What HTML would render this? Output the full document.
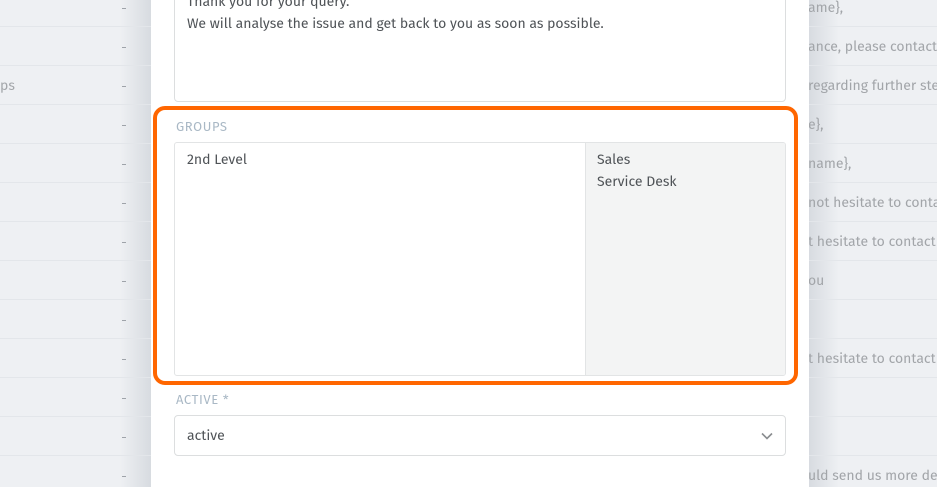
<!DOCTYPE html>
<html style="width:937px;height:487px;overflow:hidden"><head><meta charset="utf-8"><style>
*{margin:0;padding:0;box-sizing:border-box}
body{width:937px;height:487px;overflow:hidden;background:#eef0f3;font-family:"Fira Sans","Liberation Sans",sans-serif;position:relative}
.row{position:absolute;left:0;width:937px;height:39px;border-bottom:1px solid #e3e6ea;font-size:14px;color:#a3a6aa}
.dash{position:absolute;left:122px;top:0;width:4px;height:1px;background:#9ea3a9}
.bgtxt{position:absolute;left:808px;white-space:nowrap;font-size:14px;color:#a2a5a9}
.shadowL{position:absolute;left:120px;top:0;width:31px;height:487px;background:linear-gradient(to right,rgba(200,205,212,0),rgba(200,205,212,.6))}
.shadowR{position:absolute;left:809px;top:0;width:30px;height:487px;background:linear-gradient(to left,rgba(200,205,212,0),rgba(200,205,212,.6))}
.modal{position:absolute;left:151px;top:0;width:658px;height:487px;background:#fff}
.ta{position:absolute;left:23px;top:-10px;width:612px;height:112px;border:1px solid #dcdedf;border-radius:4px;font-size:14px;color:#4f5357;padding:0 12px}
.lbl{position:absolute;font-size:13px;letter-spacing:.6px;color:#a9b8c5;left:25px}
.og{position:absolute;left:2px;top:106px;width:645px;height:279px;border:4px solid #ff6600;border-radius:12px}
.box{position:absolute;left:23px;top:142px;width:612px;height:234px;border:1px solid #e2e4e5;border-radius:3px;overflow:hidden;font-size:14px;color:#4f5357}
.right{position:absolute;left:410px;top:0;right:0;bottom:0;background:#f3f4f4;border-left:1px solid #e2e4e5;padding:6px 11px;line-height:22px}
.sel{position:absolute;left:23px;top:415px;width:612px;height:41px;border:1px solid #dcdedf;border-radius:4px;font-size:14px;color:#4f5357;padding:11px 12px}
</style></head><body>
<div class="shadowL"></div><div class="shadowR"></div>
<div class="row" style="top:-12px"></div>
<div class="row" style="top:27px"></div><div class="row" style="top:66px"></div><div class="row" style="top:105px"></div><div class="row" style="top:144px"></div><div class="row" style="top:183px"></div><div class="row" style="top:222px"></div><div class="row" style="top:261px"></div><div class="row" style="top:300px"></div><div class="row" style="top:339px"></div><div class="row" style="top:378px"></div><div class="row" style="top:417px"></div><div class="row" style="top:456px;height:31px;border:0"></div>
<div class="dash" style="top:8px"></div><div class="dash" style="top:47px"></div><div class="dash" style="top:86px"></div><div class="dash" style="top:125px"></div><div class="dash" style="top:164px"></div><div class="dash" style="top:203px"></div><div class="dash" style="top:242px"></div><div class="dash" style="top:281px"></div><div class="dash" style="top:320px"></div><div class="dash" style="top:359px"></div><div class="dash" style="top:398px"></div><div class="dash" style="top:437px"></div><div class="dash" style="top:476px"></div>
<div style="position:absolute;left:0;top:77px;font-size:14px;color:#a3a6aa">ps</div>
<div class="bgtxt" style="top:-1px">ame},</div>
<div class="bgtxt" style="top:38px">ance, please contact</div>
<div class="bgtxt" style="top:77px">regarding further ste</div>
<div class="bgtxt" style="top:116px">e},</div>
<div class="bgtxt" style="top:155px">name},</div>
<div class="bgtxt" style="top:194px">not hesitate to conta</div>
<div class="bgtxt" style="top:233px">t hesitate to contact</div>
<div class="bgtxt" style="top:272px">ou</div>
<div class="bgtxt" style="top:350px">t hesitate to contact</div>
<div class="bgtxt" style="top:467px">uld send us more de</div>
<div class="modal">
 <div class="ta"><div style="position:absolute;top:0;left:12px;line-height:22px;margin-top:0px">Thank you for your query.<br>We will analyse the issue and get back to you as soon as possible.</div></div>
 <div class="og"></div>
 <div class="lbl" style="top:120px">GROUPS</div>
 <div class="box"><div style="position:absolute;left:12px;top:6px;line-height:22px">2nd Level</div><div class="right">Sales<br>Service Desk</div></div>
 <div class="lbl" style="top:393px">ACTIVE *</div>
 <div class="sel">active<svg style="position:absolute;right:12px;top:16px" width="12" height="8" viewBox="0 0 12 8"><path d="M1 1.5l5 5 5-5" fill="none" stroke="#8a8d90" stroke-width="1.6"/></svg></div>
</div>
</body></html>
